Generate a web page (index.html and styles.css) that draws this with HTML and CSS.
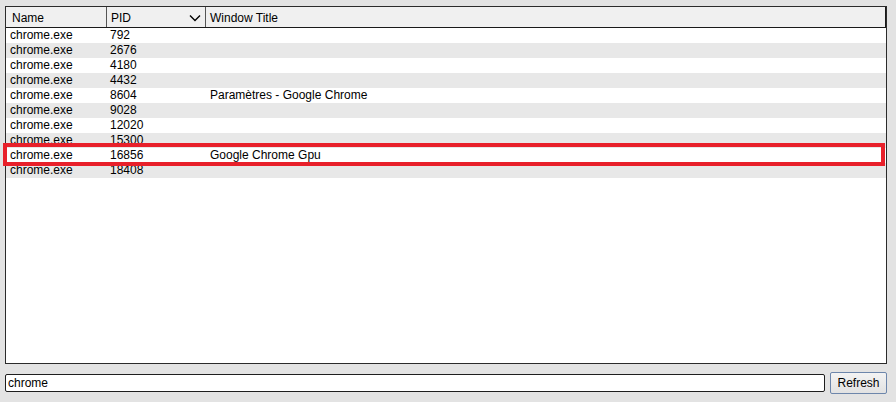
FILE: index.html
```html
<!DOCTYPE html>
<html>
<head>
<meta charset="utf-8">
<link rel="stylesheet" href="styles.css">
</head>
<body>
<div class="app">
  <div class="list">
    <div class="header">
      <div class="hcell c-name">Name</div>
      <div class="hcell c-pid">PID<svg class="chev" width="12" height="8" viewBox="0 0 12 8"><path d="M1 1.5 L6 6.5 L11 1.5" fill="none" stroke="#000" stroke-width="1.4"/></svg></div>
      <div class="hcell c-title">Window Title</div>
    </div>
    <div class="rows">
      <div class="row"><span class="c-name">chrome.exe</span><span class="c-pid">792</span><span class="c-title"></span></div>
      <div class="row alt"><span class="c-name">chrome.exe</span><span class="c-pid">2676</span><span class="c-title"></span></div>
      <div class="row"><span class="c-name">chrome.exe</span><span class="c-pid">4180</span><span class="c-title"></span></div>
      <div class="row alt"><span class="c-name">chrome.exe</span><span class="c-pid">4432</span><span class="c-title"></span></div>
      <div class="row"><span class="c-name">chrome.exe</span><span class="c-pid">8604</span><span class="c-title">Paramètres - Google Chrome</span></div>
      <div class="row alt"><span class="c-name">chrome.exe</span><span class="c-pid">9028</span><span class="c-title"></span></div>
      <div class="row"><span class="c-name">chrome.exe</span><span class="c-pid">12020</span><span class="c-title"></span></div>
      <div class="row alt"><span class="c-name">chrome.exe</span><span class="c-pid">15300</span><span class="c-title"></span></div>
      <div class="row marked"><span class="c-name">chrome.exe</span><span class="c-pid">16856</span><span class="c-title">Google Chrome Gpu</span></div>
      <div class="row alt"><span class="c-name">chrome.exe</span><span class="c-pid">18408</span><span class="c-title"></span></div>
    </div>
  </div>
  <div class="bottom">
    <div class="search">chrome</div>
    <div class="button">Refresh</div>
  </div>
</div>
</body>
</html>
```
FILE: styles.css
```css
html, body {
  margin: 0;
  padding: 0;
  background: #e3e3e3;
  font-family: "Liberation Sans", Arial, sans-serif;
  font-size: 12px;
  color: #000;
}
.app {
  width: 896px;
  height: 402px;
  box-sizing: border-box;
  padding: 6px 9px 0 5px;
  display: flex;
  flex-direction: column;
}
.list {
  height: 358px;
  box-sizing: border-box;
  border: 1px solid #2b2b2b;
  background: #fff;
  display: flex;
  flex-direction: column;
}
.header {
  height: 21px;
  box-sizing: border-box;
  display: flex;
  background: #f0f0f0;
  border-bottom: 1px solid #1a1a1a;
  border-right: 1px solid #1a1a1a;
}
.hcell {
  display: flex;
  align-items: center;
  box-sizing: border-box;
  line-height: 20px;
  padding-top: 1px;
}
.header .c-name { width: 101px; padding-left: 6px; border-right: 1px solid #555; }
.header .c-pid { width: 99px; padding-left: 4px; border-right: 1px solid #555; justify-content: space-between; padding-right: 4px; }
.header .c-title { flex: 1; padding-left: 4px; }
.chev { display: block; }
.rows {
  position: relative;
  display: flex;
  flex-direction: column;
}
.row {
  height: 15px;
  line-height: 15px;
  display: flex;
  background: #fff;
}
.row.alt { background: #e8e8e8; }
.row .c-name { width: 100px; padding-left: 4px; box-sizing: border-box; }
.row .c-pid { width: 100px; padding-left: 4px; box-sizing: border-box; }
.row .c-title { flex: 1; padding-left: 4px; }
.row.marked { position: relative; z-index: 1; }
.row.marked::after {
  content: "";
  position: absolute;
  left: -3px;
  right: 1px;
  top: -5px;
  bottom: -3px;
  border: 4px solid #e8202a;
  pointer-events: none;
}
.bottom {
  display: flex;
  align-items: center;
  margin-top: 8px;
  gap: 5px;
}
.search {
  width: 820px;
  height: 18px;
  box-sizing: border-box;
  border: 1px solid #1e1e1e;
  border-radius: 2px;
  background: #fff;
  line-height: 16px;
  padding-left: 2px;
}
.button {
  width: 57px;
  height: 22px;
  box-sizing: border-box;
  border: 1px solid #6d86ab;
  border-radius: 2px;
  background: linear-gradient(#f3f3f3, #e2e2e2);
  display: flex;
  align-items: center;
  justify-content: center;
  font-size: 12px;
}
```
